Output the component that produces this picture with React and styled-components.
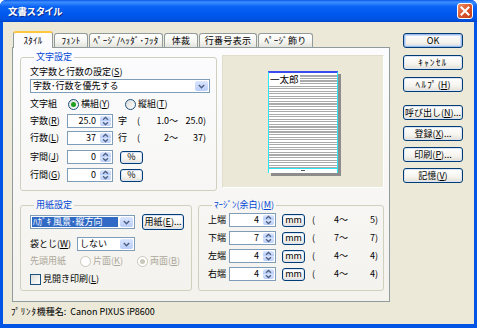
import React from 'react'
import styled, { createGlobalStyle } from 'styled-components'

const GlobalStyle = createGlobalStyle`
  * { box-sizing: border-box; }
  html, body { margin: 0; padding: 0; background: #ffffff; }
  body {
    font-family: "Noto Sans CJK JP", "Liberation Sans", sans-serif;
    font-size: 9px;
    line-height: 12px;
    color: #000;
  }
`

const Window = styled.div`
  width: 477px;
  height: 328px;
  display: flex;
  flex-direction: column;
  background: #0055e5;
  border-radius: 6px 6px 0 0;
  overflow: hidden;
`

const TitleBar = styled.div`
  flex: none;
  height: 22px;
  display: flex;
  align-items: center;
  justify-content: space-between;
  padding: 0 4px 0 8px;
  background: linear-gradient(to bottom, #0a5be8 0%, #3d8eff 10%, #0a63f4 30%, #0058ee 65%, #0052e0 90%, #0043c8 100%);
`

const Title = styled.span`
  color: #fff;
  font-weight: 700;
  font-size: 9.5px;
  font-feature-settings: "palt";
  text-shadow: 1px 1px 0 #0a2a8a;
`

const CloseButton = styled.div`
  width: 16px;
  height: 16px;
  border: 1px solid #fff;
  border-radius: 3px;
  background: linear-gradient(135deg, #f28f68, #da552b 50%, #c23f1d);
  display: flex;
  align-items: center;
  justify-content: center;
`

const Body = styled.div`
  flex: 1;
  margin: 0 3px 4px;
  background: #ece9d8;
  padding: 9px 0 0 5px;
  display: flex;
  flex-direction: column;
`

const MainRow = styled.div`
  display: flex;
  gap: 13px;
  padding-left: 4px;
`

const TabArea = styled.div`
  width: 378px;
  display: flex;
  flex-direction: column;
`

const TabStrip = styled.div`
  height: 16px;
  display: flex;
  align-items: flex-end;
  gap: 1px;
  padding-left: 1px;
`

const Tab = styled.div`
  position: relative;
  z-index: ${p => (p.$active ? 1 : 0)};
  width: ${p => p.$w}px;
  height: ${p => (p.$active ? 17 : 14)}px;
  margin-bottom: ${p => (p.$active ? -1 : 0)}px;
  display: flex;
  align-items: center;
  justify-content: center;
  white-space: nowrap;
  letter-spacing: 0.3px;
  border: 1px solid #919b9c;
  border-bottom: none;
  border-top: ${p => (p.$active ? '2px solid #ffc83c' : '1px solid #919b9c')};
  border-radius: 3px 3px 0 0;
  background: ${p => (p.$active ? '#fcfcfe' : 'linear-gradient(#ffffff, #f4f4f0 60%, #e4e3dc)')};
`

const Panel = styled.div`
  height: 255px;
  border: 1px solid #919b9c;
  background: linear-gradient(to bottom, #fcfcfe, #f3f2ed);
  padding: 3px 5px 0 7px;
  display: flex;
  flex-direction: column;
  gap: 8px;
`

const PanelRow = styled.div`
  display: flex;
  align-items: flex-start;
  gap: ${p => p.$gap}px;
`

const Group = styled.fieldset`
  margin: 0;
  min-width: 0;
  width: ${p => p.$w}px;
  height: ${p => p.$h}px;
  border: 1px solid #d0d0bf;
  border-radius: 3px;
  padding: ${p => p.$pad};
  display: flex;
  flex-direction: column;
`

const Legend = styled.legend`
  margin-left: 4px;
  padding: 0 2px;
  color: #0046d5;
  line-height: 12px;
`

const FieldRow = styled.div`
  display: flex;
  align-items: center;
  height: ${p => p.$h || 14}px;
  margin-top: ${p => p.$mt || 0}px;
  gap: ${p => p.$gap || 0}px;
  white-space: nowrap;
`

const FieldLabel = styled.span`
  flex: none;
  width: ${p => p.$w}px;
  color: ${p => (p.$disabled ? '#aca899' : '#000')};
`

const Key = styled.u`
  text-underline-offset: 1px;
`

const SelectBox = styled.div`
  flex: none;
  width: ${p => p.$w}px;
  height: 14px;
  border: 1px solid #7f9db9;
  background: #fff;
  display: flex;
  align-items: stretch;
`

const SelectText = styled.span`
  flex: 1;
  margin: 1px;
  padding-left: 1px;
  display: flex;
  align-items: center;
  white-space: nowrap;
  background: ${p => (p.$hl ? '#316ac5' : 'transparent')};
  color: ${p => (p.$hl ? '#fff' : '#000')};
`

const SelectArrow = styled.span`
  width: 13px;
  margin: 1px;
  border-radius: 2px;
  background: linear-gradient(#dbe5fd, #b9cdf8);
  display: flex;
  align-items: center;
  justify-content: center;
`

const SpinBox = styled.div`
  flex: none;
  width: ${p => p.$w}px;
  height: 14px;
  border: 1px solid #7f9db9;
  background: #fff;
  display: flex;
  align-items: stretch;
`

const SpinValue = styled.span`
  flex: 1;
  text-align: right;
  padding-right: 3px;
  line-height: 12px;
`

const SpinArrows = styled.span`
  width: 11px;
  margin: 1px;
  border-radius: 2px;
  background: linear-gradient(#dbe5fd, #b9cdf8 50%, #dbe5fd 50%, #b9cdf8);
  display: flex;
  align-items: center;
  justify-content: center;
`

const XPButton = styled.button`
  flex: none;
  width: ${p => p.$w}px;
  height: ${p => p.$h}px;
  margin-left: ${p => p.$ml || 0}px;
  padding: 0;
  font: inherit;
  letter-spacing: ${p => p.$ls || 0}px;
  color: #000;
  border: 1px solid #003c74;
  border-radius: 3px;
  background: linear-gradient(to bottom, #ffffff 0%, #f5f4ef 60%, #e2dfd4 100%);
  box-shadow: ${p => (p.$default ? 'inset 0 0 0 1px #9cbcf0, inset 0 0 0 2px #cddcf8' : 'inset 0 0 0 1px #dbe4f6')};
  display: flex;
  align-items: center;
  justify-content: center;
  white-space: nowrap;
`

const Range = styled.div`
  display: flex;
  margin-left: ${p => p.$ml}px;
`

const Cell = styled.span`
  flex: none;
  width: ${p => p.$w}px;
  text-align: ${p => p.$align || 'left'};
`

const RadioItem = styled.span`
  flex: none;
  display: inline-flex;
  align-items: center;
  width: ${p => (p.$w ? `${p.$w}px` : 'auto')};
  color: ${p => (p.$disabled ? '#aca899' : '#000')};
`

const RadioDot = styled.span`
  flex: none;
  width: 11px;
  height: 11px;
  margin-right: 2px;
  border-radius: 50%;
  border: 1px solid ${p => (p.$disabled ? '#cac8bb' : '#1c5180')};
  background: ${p => (p.$disabled ? '#fff' : 'linear-gradient(135deg, #dcdcd7, #ffffff)')};
  display: flex;
  align-items: center;
  justify-content: center;

  &::after {
    content: '';
    width: 5px;
    height: 5px;
    border-radius: 50%;
    background: ${p => (p.$checked ? (p.$disabled ? '#cac8bb' : '#21a121') : 'transparent')};
  }
`

const CheckBox = styled.span`
  flex: none;
  width: 11px;
  height: 11px;
  margin-right: 2px;
  border: 1px solid #1c5180;
  background: linear-gradient(135deg, #dcdcd7, #ffffff);
`

const Preview = styled.div`
  flex: none;
  width: 162px;
  height: 133px;
  margin-top: 4px;
  background: #ebe8d7;
  border: 1px solid;
  border-color: #e0ddcc #ffffff #ffffff #e0ddcc;
  display: flex;
  align-items: center;
  justify-content: center;
`

const Paper = styled.div`
  width: 70px;
  height: 102px;
  background: #fff;
  border-left: 1px solid #2ce6f2;
  border-right: 1px solid #2ce6f2;
  border-top: 2px solid #3a4bf0;
  box-shadow: 3px 3px 0 #8c8c8c;
  display: flex;
  flex-direction: column;
`

const PaperLines = styled.div`
  flex: 1;
  margin-top: 1px;
  background: repeating-linear-gradient(to bottom, #ffffff 0, #ffffff 1.4px, #aaaaaa 1.4px, #aaaaaa 2.55px);
`

const PaperTitle = styled.span`
  display: inline-block;
  background: #fff;
  font-size: 9.5px;
  line-height: 9px;
  padding: 0 1px;
`

const PaperFoot = styled.div`
  height: 5px;
  border-top: 1px solid #2ce6f2;
  display: flex;
  align-items: center;
  justify-content: center;

  &::after {
    content: '';
    width: 4px;
    height: 1px;
    background: #555;
  }
`

const ButtonColumn = styled.div`
  width: 60px;
  padding-top: 2px;
  display: flex;
  flex-direction: column;
`

const ButtonGroup = styled.div`
  display: flex;
  flex-direction: column;
  gap: ${p => p.$gap}px;
  margin-top: ${p => p.$mt || 0}px;
`

const PrinterLine = styled.div`
  margin-top: 4px;
  padding-left: 3px;
  white-space: pre;
`

const Kana = styled.span`
  letter-spacing: ${p => p.$ls}px;
`

const Mn = ({ k }) => (
  <>
    (<Key>{k}</Key>)
  </>
)

const Chevron = () => (
  <svg width="7" height="5" viewBox="0 0 7 5">
    <path d="M0.8 1 L3.5 3.7 L6.2 1" fill="none" stroke="#4d6185" strokeWidth="1.5" />
  </svg>
)

const SpinIcon = () => (
  <svg width="7" height="10" viewBox="0 0 7 10">
    <path d="M1 3.8 L3.5 1.5 L6 3.8 M1 6.2 L3.5 8.5 L6 6.2" fill="none" stroke="#4d6185" strokeWidth="1.3" />
  </svg>
)

const Select = ({ w, hl, children }) => (
  <SelectBox $w={w}>
    <SelectText $hl={hl}>{children}</SelectText>
    <SelectArrow>
      <Chevron />
    </SelectArrow>
  </SelectBox>
)

const Spin = ({ w, value }) => (
  <SpinBox $w={w}>
    <SpinValue>{value}</SpinValue>
    <SpinArrows>
      <SpinIcon />
    </SpinArrows>
  </SpinBox>
)

const Radio = ({ w, checked, disabled, children }) => (
  <RadioItem $w={w} $disabled={disabled}>
    <RadioDot $checked={checked} $disabled={disabled} />
    {children}
  </RadioItem>
)

const tabs = [
  { label: 'ｽﾀｲﾙ', w: 40, active: true },
  { label: 'ﾌｫﾝﾄ', w: 34 },
  { label: 'ﾍﾟｰｼﾞ/ﾍｯﾀﾞ･ﾌｯﾀ', w: 74 },
  { label: '体裁', w: 34 },
  { label: '行番号表示', w: 58 },
  { label: 'ﾍﾟｰｼﾞ飾り', w: 55 },
]

const charRows = [
  { label: '字数', k: 'R', value: '25.0', unit: '字', from: '1.0〜', to: '25.0)', mt: 3 },
  { label: '行数', k: 'L', value: '37', unit: '行', from: '2〜', to: '37)', mt: 3 },
]

const margins = [
  { label: '上端', value: 4, from: '4〜', to: '5)' },
  { label: '下端', value: 7, from: '7〜', to: '7)' },
  { label: '左端', value: 4, from: '4〜', to: '4)' },
  { label: '右端', value: 4, from: '4〜', to: '4)' },
]

export default function App() {
  return (
    <>
      <GlobalStyle />
      <Window>
        <TitleBar>
          <Title>文書スタイル</Title>
          <CloseButton>
            <svg width="10" height="10" viewBox="0 0 10 10">
              <path d="M1.5 1.5 L8.5 8.5 M8.5 1.5 L1.5 8.5" stroke="#fff" strokeWidth="2" strokeLinecap="square" />
            </svg>
          </CloseButton>
        </TitleBar>

        <Body>
          <MainRow>
            <TabArea>
              <TabStrip>
                {tabs.map(t => (
                  <Tab key={t.label} $w={t.w} $active={t.active}>
                    {t.label}
                  </Tab>
                ))}
              </TabStrip>

              <Panel>
                <PanelRow $gap={5}>
                  <Group $w={197} $h={140} $pad="3px 0 0 9px">
                    <Legend>文字設定</Legend>
                    <FieldRow $h={12}>
                      文字数と行数の設定<Mn k="S" />
                    </FieldRow>
                    <FieldRow $mt={1}>
                      <Select w={180}>字数･行数を優先する</Select>
                    </FieldRow>
                    <FieldRow $mt={4}>
                      <FieldLabel $w={38}>文字組</FieldLabel>
                      <Radio w={57} checked>
                        横組<Mn k="Y" />
                      </Radio>
                      <Radio>
                        縦組<Mn k="T" />
                      </Radio>
                    </FieldRow>
                    {charRows.map(r => (
                      <FieldRow key={r.label} $mt={r.mt}>
                        <FieldLabel $w={37}>
                          {r.label}
                          <Mn k={r.k} />
                        </FieldLabel>
                        <Spin w={46} value={r.value} />
                        <Range $ml={5}>
                          <Cell $w={19}>{r.unit}</Cell>
                          <Cell $w={5}>(</Cell>
                          <Cell $w={36} $align="right">{r.from}</Cell>
                          <Cell $w={28} $align="right">{r.to}</Cell>
                        </Range>
                      </FieldRow>
                    ))}
                    <FieldRow $mt={5}>
                      <FieldLabel $w={37}>
                        字間<Mn k="J" />
                      </FieldLabel>
                      <Spin w={46} value="0" />
                      <XPButton $w={23} $h={13} $ml={7}>%</XPButton>
                    </FieldRow>
                    <FieldRow $mt={4}>
                      <FieldLabel $w={37}>
                        行間<Mn k="G" />
                      </FieldLabel>
                      <Spin w={46} value="0" />
                      <XPButton $w={23} $h={13} $ml={7}>%</XPButton>
                    </FieldRow>
                  </Group>

                  <Preview>
                    <Paper>
                      <PaperLines>
                        <PaperTitle>一太郎</PaperTitle>
                      </PaperLines>
                      <PaperFoot />
                    </Paper>
                  </Preview>
                </PanelRow>

                <PanelRow $gap={6}>
                  <Group $w={172} $h={92} $pad="3px 0 0 9px">
                    <Legend>用紙設定</Legend>
                    <FieldRow $h={16} $gap={7}>
                      <Select w={105} hl>
                        ﾊｶﾞｷ 風景･縦方向
                      </Select>
                      <XPButton $w={42} $h={16}>
                        用紙<Mn k="E" />...
                      </XPButton>
                    </FieldRow>
                    <FieldRow $mt={7}>
                      <FieldLabel $w={47}>
                        袋とじ<Mn k="W" />
                      </FieldLabel>
                      <Select w={58}>しない</Select>
                    </FieldRow>
                    <FieldRow $mt={3}>
                      <FieldLabel $w={50} $disabled>
                        先頭用紙
                      </FieldLabel>
                      <Radio w={57} disabled>
                        片面<Mn k="K" />
                      </Radio>
                      <Radio disabled checked>
                        両面<Mn k="B" />
                      </Radio>
                    </FieldRow>
                    <FieldRow $mt={4}>
                      <CheckBox />
                      見開き印刷<Mn k="L" />
                    </FieldRow>
                  </Group>

                  <Group $w={186} $h={92} $pad="2px 0 0 9px">
                    <Legend>
                      ﾏｰｼﾞﾝ(余白)<Mn k="M" />
                    </Legend>
                    {margins.map((m, i) => (
                      <FieldRow key={m.label} $mt={i ? 4 : 0}>
                        <FieldLabel $w={21}>{m.label}</FieldLabel>
                        <Spin w={47} value={m.value} />
                        <XPButton $w={23} $h={13} $ml={6}>mm</XPButton>
                        <Range $ml={7}>
                          <Cell $w={10}>(</Cell>
                          <Cell $w={26} $align="right">{m.from}</Cell>
                          <Cell $w={30} $align="right">{m.to}</Cell>
                        </Range>
                      </FieldRow>
                    ))}
                  </Group>
                </PanelRow>
              </Panel>
            </TabArea>

            <ButtonColumn>
              <ButtonGroup $gap={7}>
                <XPButton $w={60} $h={15} $default>OK</XPButton>
                <XPButton $w={60} $h={15} $ls={1.4}>ｷｬﾝｾﾙ</XPButton>
                <XPButton $w={60} $h={15}>
                  <Kana $ls={1.4}>ﾍﾙﾌﾟ</Kana>
                  <Mn k="H" />
                </XPButton>
              </ButtonGroup>
              <ButtonGroup $gap={6} $mt={13}>
                <XPButton $w={60} $h={15}>
                  呼び出し<Mn k="N" />...
                </XPButton>
                <XPButton $w={60} $h={15}>
                  登録<Mn k="X" />...
                </XPButton>
                <XPButton $w={60} $h={15}>
                  印刷<Mn k="P" />...
                </XPButton>
                <XPButton $w={60} $h={15}>
                  記憶<Mn k="V" />
                </XPButton>
              </ButtonGroup>
            </ButtonColumn>
          </MainRow>

          <PrinterLine>
            <Kana $ls={0.8}>ﾌﾟﾘﾝﾀ</Kana>機種名:  Canon PIXUS iP8600
          </PrinterLine>
        </Body>
      </Window>
    </>
  )
}
